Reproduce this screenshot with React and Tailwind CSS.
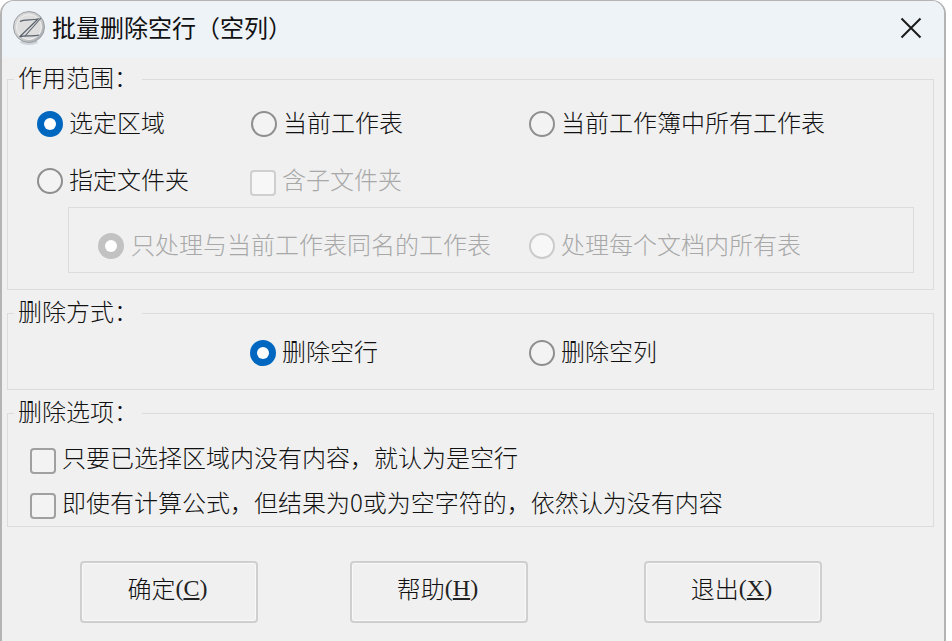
const cjk = { fontFamily: '"Noto Sans CJK SC", sans-serif' };

function Radio({ checked, disabled }) {
  if (checked) {
    return (
      <span className={`flex h-[26px] w-[26px] shrink-0 items-center justify-center rounded-full ${disabled ? 'bg-[#c2c2c2]' : 'bg-[#0067c0]'}`}>
        <span className="h-[12px] w-[12px] rounded-full bg-white" />
      </span>
    );
  }
  return (
    <span className={`h-[26px] w-[26px] shrink-0 rounded-full border-2 ${disabled ? 'border-[#cbcbcb] bg-[#f7f7f7]' : 'border-[#8f8f8f] bg-[#f3f3f3]'}`} />
  );
}

function Check({ disabled }) {
  return (
    <span className={`mt-[4px] h-[26px] w-[26px] shrink-0 rounded-[4px] border-2 ${disabled ? '-ml-[1px] border-[#cfcfcf] bg-[#f7f7f7]' : 'border-[#a0a0a0] bg-[#f3f3f3]'}`} />
  );
}

function Opt({ children, gap = 'gap-[6px]', disabled, control }) {
  return (
    <div className={`flex h-[28px] items-center ${gap}`}>
      {control}
      <span className={`-mt-[4px] whitespace-nowrap text-[24px] font-light leading-[28px] ${disabled ? 'text-[#a8a8a8]' : 'text-[#111111]'}`}>{children}</span>
    </div>
  );
}

function Group({ title, className, children }) {
  return (
    <fieldset className={`mx-[7px] w-[927px] border border-[#dcdcdc] ${className}`}>
      <legend className="ml-[6px] h-[26px] px-[4px] text-[24px] font-light leading-[26px] text-[#111111]">
        <span className="block -translate-y-[2px]">{title}</span>
      </legend>
      {children}
    </fieldset>
  );
}

function Btn({ label, k }) {
  return (
    <button className="flex h-[62px] w-[178px] items-center justify-center rounded-[4px] border-2 border-[#cfcfcf] bg-[#f0f0f0] pb-[8px] pr-[3px] text-[24px] font-light text-[#111111] shadow-[inset_0_0_0_1px_#f8f8f8]">
      {label}
      <span className="text-[24px] text-[#222222]" style={{ fontFamily: '"Liberation Serif", serif' }}>(<span className="underline">{k}</span>)</span>
    </button>
  );
}

function Logo() {
  return (
    <svg width="34" height="36" viewBox="0 0 34 36" className="shrink-0">
      <defs>
        <linearGradient id="lg" x1="0" y1="0" x2="1" y2="1">
          <stop offset="0" stopColor="#dcdcdc" />
          <stop offset="0.5" stopColor="#cfcfcf" />
          <stop offset="1" stopColor="#9fa4a8" />
        </linearGradient>
      </defs>
      <ellipse cx="16" cy="31" rx="9" ry="3" fill="#cdd3d9" />
      <circle cx="16" cy="16" r="15.5" fill="url(#lg)" stroke="#9a9ea2" strokeWidth="1" />
      <circle cx="16" cy="16" r="12.5" fill="#dedede" stroke="#f2f2f2" strokeWidth="1" />
      <path d="M7 10.5C11 8 18 9.5 25 8L6.5 26C12 23.5 20 26 26 24" fill="none" stroke="#59616b" strokeWidth="1.2" />
      <path d="M28 7L12 25" fill="none" stroke="#59616b" strokeWidth="1.1" />
    </svg>
  );
}

export default function App() {
  return (
    <div className="h-[641px] w-[952px] overflow-hidden bg-white" style={cjk}>
      <div className="h-[656px] w-[946px] overflow-hidden rounded-[14px] border-2 border-t border-[#b4b4b4] bg-[#f0f0f0]">
        <div className="flex h-[56px] items-center bg-[#eef3f8] pl-[11px] pr-[22px]">
          <Logo />
          <span className="-mt-[4px] ml-[5px] text-[24px] leading-[32px] text-[#111111]">批量删除空行（空列）</span>
          <svg width="22" height="22" viewBox="0 0 22 22" className="-mt-[2px] ml-auto">
            <path d="M1.5 1.5L20.5 20.5M20.5 1.5L1.5 20.5" stroke="#1a1a1a" strokeWidth="2" fill="none" />
          </svg>
        </div>
        <div className="-ml-[2px]">
          <Group title="作用范围：" className="mt-[9px] h-[224px]">
            <div className="ml-[29px] mt-[18px] grid grid-cols-[214px_278px_1fr] items-center">
              <Opt control={<Radio checked />}>选定区域</Opt>
              <Opt control={<Radio />}>当前工作表</Opt>
              <Opt control={<Radio />}>当前工作簿中所有工作表</Opt>
            </div>
            <div className="ml-[29px] mt-[29px] grid grid-cols-[214px_278px_1fr] items-center">
              <Opt control={<Radio />}>指定文件夹</Opt>
              <Opt disabled control={<Check disabled />}>含子文件夹</Opt>
            </div>
            <div className="ml-[60px] mt-[12px] grid h-[66px] w-[846px] grid-cols-[431px_1fr] items-center border border-[#dcdcdc] pl-[29px] pt-[12px]">
              <Opt gap="gap-[7px]" disabled control={<Radio checked disabled />}>只处理与当前工作表同名的工作表</Opt>
              <Opt disabled control={<Radio disabled />}>处理每个文档内所有表</Opt>
            </div>
          </Group>
          <Group title="删除方式：" className="mt-[10px] h-[90px]">
            <div className="ml-[242px] mt-[13px] grid grid-cols-[279px_1fr] items-center">
              <Opt control={<Radio checked />}>删除空行</Opt>
              <Opt control={<Radio />}>删除空列</Opt>
            </div>
          </Group>
          <Group title="删除选项：" className="mt-[10px] h-[127px]">
            <div className="ml-[22px] mt-[19px] flex flex-col gap-[17px]">
              <Opt control={<Check />}>只要已选择区域内没有内容，就认为是空行</Opt>
              <Opt control={<Check />}>即使有计算公式，但结果为0或为空字符的，依然认为没有内容</Opt>
            </div>
          </Group>
          <div className="mt-[34px] flex pl-[80px]">
            <Btn label="确定" k="C" />
            <div className="ml-[92px]"><Btn label="帮助" k="H" /></div>
            <div className="ml-[116px]"><Btn label="退出" k="X" /></div>
          </div>
        </div>
      </div>
    </div>
  );
}
